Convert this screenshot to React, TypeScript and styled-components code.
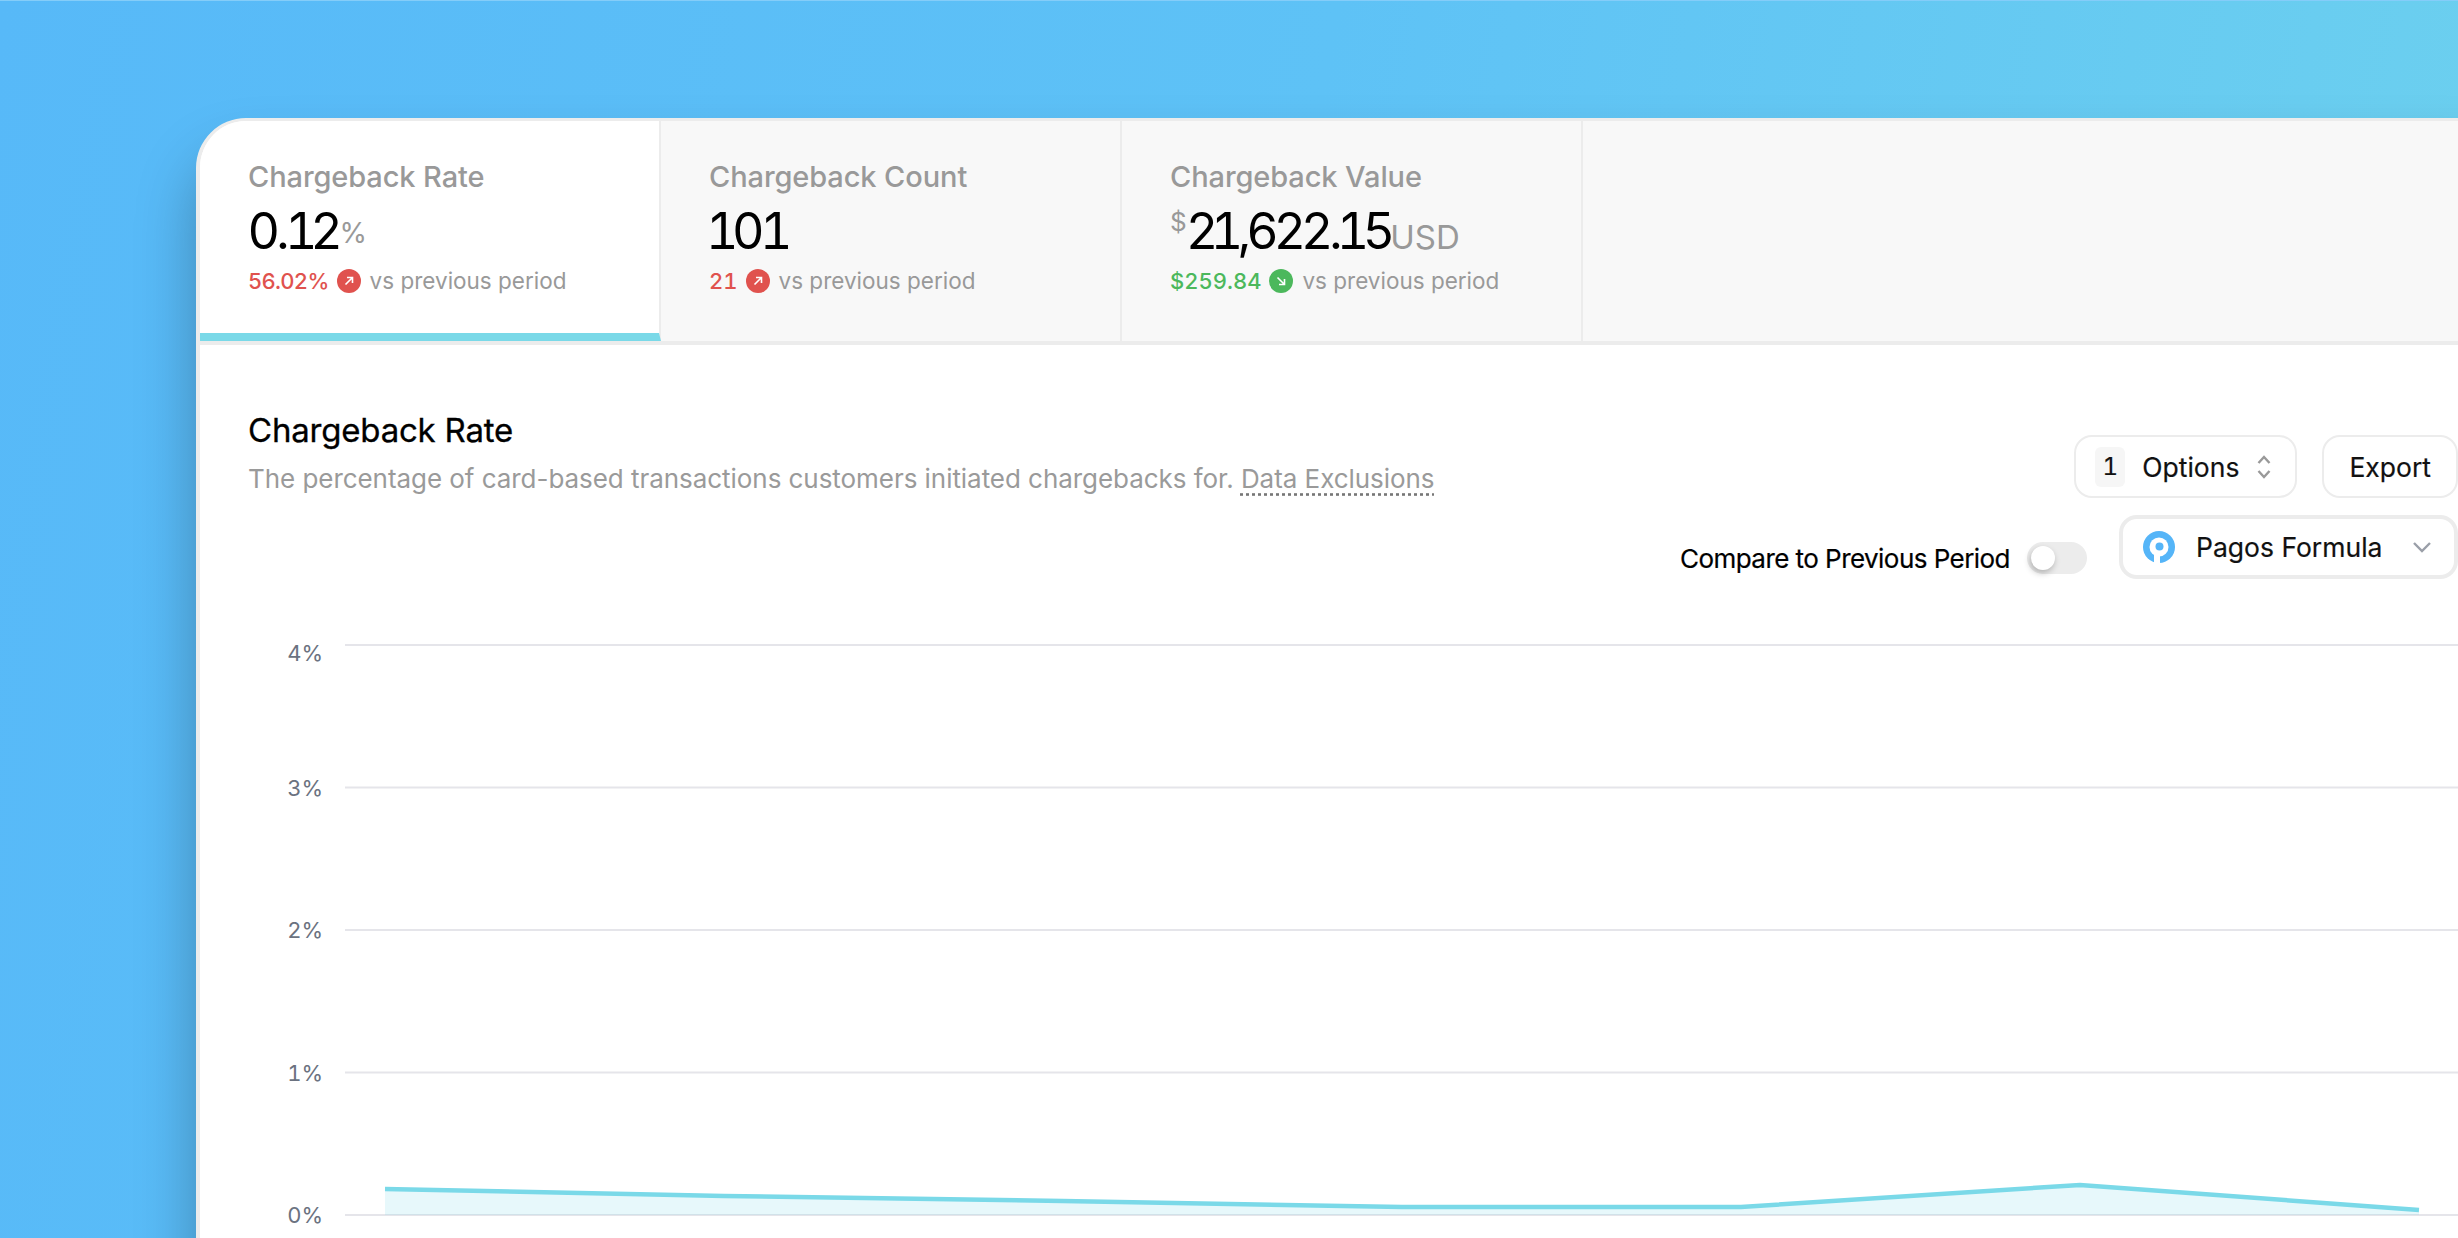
import React from "react";
import styled, { createGlobalStyle } from "styled-components";

const Global = createGlobalStyle`
  html, body { margin: 0; padding: 0; height: 100%; }
  body { font-family: "Inter", "Liberation Sans", sans-serif; overflow: hidden; }
  #root { height: 100%; }
`;

const Page = styled.div`
  width: 2458px;
  height: 1238px;
  overflow: hidden;
  padding: 117px 0 0 196px;
  box-sizing: border-box;
  border-top: 1px solid #84cdf9;
  background: linear-gradient(100deg, #57b9f8 0%, #5ec2f6 50%, #6dd1ee 100%);
`;

const Card = styled.div`
  width: 2314px;
  height: 1200px;
  box-sizing: border-box;
  background: #fff;
  border: 4px solid #ececec;
  border-top-width: 3px;
  border-radius: 50px 0 0 0;
  box-shadow: 0 40px 60px rgba(0, 0, 0, 0.28);
  overflow: hidden;
`;

const TabBar = styled.div`
  display: flex;
  height: 224px;
  box-sizing: border-box;
  background: #f8f8f8;
  border-bottom: 4px solid #ececec;
`;

const Tab = styled.div<{ $active?: boolean }>`
  width: 461px;
  box-sizing: border-box;
  padding: 39px 0 0 48px;
  background: ${(p) => (p.$active ? "#fff" : "#f8f8f8")};
  border-right: 2px solid #ececec;
  border-bottom: ${(p) => (p.$active ? "8px solid #7ad9e8" : "none")};
`;

const TabLabel = styled.div`
  font-size: 29px;
  line-height: 34px;
  font-weight: 500;
  color: #999;
  letter-spacing: -0.1px;
`;

const TabValue = styled.div`
  display: flex;
  align-items: baseline;
  height: 58px;
  margin-top: 8px;
  font-size: 50px;
  line-height: 58px;
  font-weight: 400;
  color: #000;
`;

const Figure = styled.span<{ $track?: string }>`
  letter-spacing: ${(p) => p.$track ?? "-2.4px"};
`;

const One = styled.span`
  font-variant-numeric: tabular-nums;
  margin-left: -3px;
  letter-spacing: -6px;
`;

const Unit = styled.span<{ $raised?: boolean }>`
  font-size: ${(p) => (p.$raised ? "28px" : "33px")};
  color: #999;
  transform: translateY(${(p) => (p.$raised ? "-6px" : "0")});
`;

const Currency = styled.span`
  font-size: 26px;
  color: #999;
  align-self: flex-start;
  line-height: 40px;
`;

const Delta = styled.div`
  display: flex;
  align-items: center;
  margin-top: 6px;
  font-size: 22.5px;
  line-height: 30px;
  color: #999;
`;

const DeltaNumber = styled.span<{ $good?: boolean; $tight?: boolean }>`
  font-size: 22px;
  font-weight: 500;
  font-variant-numeric: tabular-nums;
  letter-spacing: ${(p) => (p.$tight ? "-0.7px" : "0")};
  color: ${(p) => (p.$good ? "#4cb85c" : "#e0524e")};
`;

const ArrowBadge = styled.span<{ $good?: boolean }>`
  display: flex;
  align-items: center;
  justify-content: center;
  width: 24px;
  height: 24px;
  margin: 0 9px 0 8px;
  border-radius: 50%;
  background: ${(p) => (p.$good ? "#4cb85c" : "#e0524e")};
`;

const Body = styled.div`
  padding: 0 48px;
`;

const Header = styled.div`
  display: flex;
  justify-content: space-between;
  align-items: flex-start;
`;

const TitleBlock = styled.div`
  padding-top: 65px;
`;

const Title = styled.h2`
  margin: 0;
  font-size: 33px;
  line-height: 40px;
  font-weight: 400;
  color: #000;
  letter-spacing: -0.2px;
  -webkit-text-stroke: 0.3px #000;
`;

const Description = styled.p`
  margin: 12px 0 0;
  font-size: 26px;
  line-height: 34px;
  font-weight: 400;
  color: #9a9a9a;
  letter-spacing: -0.05px;
`;

const Exclusions = styled.span`
  text-decoration: underline dotted #777;
  text-underline-offset: 5px;
`;

const Controls = styled.div`
  display: flex;
  flex-direction: column;
  align-items: flex-end;
  padding-top: 90px;
  gap: 17px;
`;

const ControlRow = styled.div`
  display: flex;
  align-items: flex-start;
`;

const OutlineButton = styled.button<{ $pad: string }>`
  display: flex;
  align-items: center;
  height: 63px;
  box-sizing: border-box;
  padding: ${(p) => p.$pad};
  margin-left: 25px;
  font-family: inherit;
  font-size: 26.5px;
  font-weight: 400;
  color: #111;
  background: #fff;
  border: 2px solid #ececec;
  border-radius: 18px;
  -webkit-text-stroke: 0.2px #111;
`;

const ButtonChevrons = styled.svg`
  margin-left: 17px;
`;

const CountBadge = styled.span`
  display: flex;
  align-items: center;
  justify-content: center;
  width: 30px;
  height: 40px;
  margin-right: 17px;
  border-radius: 6px;
  background: #f6f6f6;
  font-size: 24px;
  font-variant-numeric: tabular-nums;
`;

const ToggleGroup = styled.div`
  display: flex;
  align-items: center;
  height: 32px;
  margin-top: 27px;
`;

const ToggleLabel = styled.span`
  font-size: 26px;
  font-weight: 400;
  color: #000;
  letter-spacing: -0.55px;
  -webkit-text-stroke: 0.2px #000;
`;

const Track = styled.span`
  display: flex;
  align-items: center;
  width: 60px;
  height: 32px;
  margin-left: 17px;
  padding-left: 4px;
  box-sizing: border-box;
  border-radius: 16px;
  background: #ececec;
`;

const Knob = styled.span`
  width: 24px;
  height: 24px;
  border-radius: 50%;
  background: #fff;
  box-shadow: -1px 3px 6px rgba(0, 0, 0, 0.25);
`;

const Select = styled.div`
  display: flex;
  align-items: center;
  width: 339px;
  height: 64px;
  box-sizing: border-box;
  margin-left: 32px;
  padding: 0 22px 0 20px;
  background: #fff;
  border: 4px solid #ececec;
  border-radius: 18px;
  font-size: 26.5px;
  font-weight: 400;
  color: #111;
  -webkit-text-stroke: 0.2px #111;
`;

const SelectText = styled.span`
  flex: 1;
  margin-left: 21px;
`;

const Chart = styled.svg`
  display: block;
  margin: 15px 0 0 -48px;
  overflow: visible;
`;

const AxisText = styled.text`
  font-family: "Inter", "Liberation Sans", sans-serif;
  font-size: 22px;
  font-variant-numeric: tabular-nums;
  fill: #6b7280;
  text-anchor: end;
`;

const Up = () => (
  <svg width="14" height="14" viewBox="0 0 14 14" fill="none" stroke="#fff" strokeWidth="1.6">
    <path d="M3.5 10.5 10 4M5 3.5h5.5V9" />
  </svg>
);

const Down = () => (
  <svg width="14" height="14" viewBox="0 0 14 14" fill="none" stroke="#fff" strokeWidth="1.6">
    <path d="M3.5 3.5 10 10M10.5 5v5.5H5" />
  </svg>
);

const ticks = [
  { label: "4%", y: 51, shift: 16 },
  { label: "3%", y: 193.5, shift: 8 },
  { label: "2%", y: 336, shift: 8 },
  { label: "1%", y: 478.5, shift: 8 },
  { label: "0%", y: 621, shift: 8 },
];

const pts: [number, number][] = [
  [185, 595],
  [524, 602],
  [863, 607],
  [1202, 613],
  [1541, 613],
  [1880, 591],
  [2219, 616],
];
const line = pts.map((p) => p.join(",")).join(" ");
const area = `185,621 ${line} 2219,621`;

export default function App() {
  return (
    <Page>
      <Global />
      <Card>
        <TabBar>
          <Tab $active>
            <TabLabel>Chargeback Rate</TabLabel>
            <TabValue>
              <Figure>0.<One>1</One>2</Figure><Unit $raised>%</Unit>
            </TabValue>
            <Delta>
              <DeltaNumber $tight>56.02%</DeltaNumber>
              <ArrowBadge><Up /></ArrowBadge>
              vs previous period
            </Delta>
          </Tab>
          <Tab>
            <TabLabel>Chargeback Count</TabLabel>
            <TabValue>
              <Figure $track="-1px"><One>1</One>0<One>1</One></Figure>
            </TabValue>
            <Delta>
              <DeltaNumber>21</DeltaNumber>
              <ArrowBadge><Up /></ArrowBadge>
              vs previous period
            </Delta>
          </Tab>
          <Tab>
            <TabLabel>Chargeback Value</TabLabel>
            <TabValue>
              <Currency>$</Currency>
              <Figure $track="-3.4px">2<One>1</One>,622.<One>1</One>5</Figure>
              <Unit>USD</Unit>
            </TabValue>
            <Delta>
              <DeltaNumber $good>$259.84</DeltaNumber>
              <ArrowBadge $good><Down /></ArrowBadge>
              vs previous period
            </Delta>
          </Tab>
        </TabBar>
        <Body>
          <Header>
            <TitleBlock>
              <Title>Chargeback Rate</Title>
              <Description>
                The percentage of card-based transactions customers initiated chargebacks for.{" "}
                <Exclusions>Data Exclusions</Exclusions>
              </Description>
            </TitleBlock>
            <Controls>
              <ControlRow>
                <OutlineButton $pad="0 23px 0 19px">
                  <CountBadge>1</CountBadge>
                  Options
                  <ButtonChevrons width="16" height="28" viewBox="0 0 16 28" fill="none" stroke="#999" strokeWidth="2.4">
                    <path d="M2.5 10 8 4l5.5 6M2.5 18 8 24l5.5-6" />
                  </ButtonChevrons>
                </OutlineButton>
                <OutlineButton $pad="0 25px">Export</OutlineButton>
              </ControlRow>
              <ControlRow>
                <ToggleGroup>
                  <ToggleLabel>Compare to Previous Period</ToggleLabel>
                  <Track><Knob /></Track>
                </ToggleGroup>
                <Select>
                  <svg width="32" height="32" viewBox="0 0 32 32">
                    <circle cx="16" cy="16" r="16" fill="#55b5f8" />
                    <circle cx="16" cy="16" r="9.5" fill="#fff" />
                    <rect x="11" y="16" width="6" height="16" fill="#fff" />
                    <circle cx="16.5" cy="15.5" r="4" fill="#55b5f8" />
                  </svg>
                  <SelectText>Pagos Formula</SelectText>
                  <svg width="20" height="12" viewBox="0 0 20 12" fill="none" stroke="#9a9fa8" strokeWidth="2.4">
                    <path d="M2 2l8 8 8-8" />
                  </svg>
                </Select>
              </ControlRow>
            </Controls>
          </Header>
          <Chart width="2258" height="640" viewBox="0 0 2258 640">
            {ticks.map((t) => (
              <g key={t.label}>
                <line x1="145" x2="2258" y1={t.y} y2={t.y} stroke="#e5e5ea" strokeWidth="2" />
                <AxisText x="123" y={t.y + t.shift}>{t.label}</AxisText>
              </g>
            ))}
            <polygon points={area} fill="#7ad9e8" fillOpacity="0.18" />
            <polyline points={line} fill="none" stroke="#7ad9e8" strokeWidth="4.5" />
          </Chart>
        </Body>
      </Card>
    </Page>
  );
}
